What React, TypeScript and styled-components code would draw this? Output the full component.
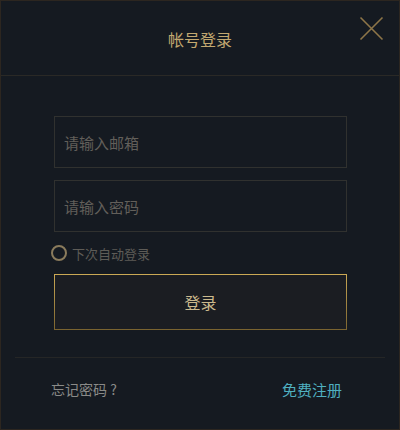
import React from "react";
import styled, { createGlobalStyle } from "styled-components";

const Global = createGlobalStyle`
  html, body { margin: 0; padding: 0; background: #151a21; }
  * { box-sizing: border-box; }
  body { font-family: "Noto Sans CJK SC", "Noto Sans", sans-serif; }
`;

const Dialog = styled.div`
  width: 400px;
  height: 430px;
  background: #151a21;
  border: 1px solid #2c2620;
  display: flex;
  flex-direction: column;
`;

const Header = styled.div`
  position: relative;
  height: 75px;
  border-bottom: 1px solid #2a2926;
  display: flex;
  align-items: center;
  justify-content: center;
  padding-top: 1px;
`;

const Title = styled.div`
  font-size: 16px;
  color: #c2a870;
  line-height: 1;
`;

const Close = styled.button`
  position: absolute;
  right: 15px;
  top: 15px;
  width: 25px;
  height: 25px;
  padding: 0;
  border: 0;
  background: none;
  cursor: pointer;
  display: block;
`;

const Body = styled.div`
  padding: 40px 53px 0 53px;
  display: flex;
  flex-direction: column;
`;

const Field = styled.input<{ $mb?: number }>`
  width: 293px;
  height: 52px;
  background: transparent;
  border: 1px solid #30312f;
  padding: 0 9px;
  font-family: inherit;
  font-size: 15px;
  color: #aaa;
  outline: none;
  margin-bottom: ${(p) => p.$mb ?? 0}px;
  &::placeholder { color: #625f5a; }
`;

const Remember = styled.label`
  display: flex;
  align-items: center;
  gap: 5px;
  margin: 12px 0 0 -3px;
  height: 18px;
  font-size: 13px;
  color: #5e5c57;
`;

const Radio = styled.span`
  width: 16px;
  height: 16px;
  border-radius: 50%;
  border: 2px solid #8a7b5c;
`;

const LoginButton = styled.button`
  margin-top: 12px;
  width: 293px;
  height: 56px;
  background: #1b1d22;
  border: 1px solid;
  border-image: linear-gradient(#cba955, #7a6330) 1;
  font-family: inherit;
  font-size: 16px;
  color: #cbb98d;
  cursor: pointer;
`;

const Divider = styled.div`
  margin: 27px 14px 0 14px;
  height: 1px;
  background: #252626;
`;

const Footer = styled.div`
  display: flex;
  justify-content: space-between;
  align-items: center;
  padding: 0 57px 4px 50px;
  height: 66px;
`;

const Link = styled.a<{ $c: string; $s: number }>`
  color: ${(p) => p.$c};
  font-size: ${(p) => p.$s}px;
  text-decoration: none;
  cursor: pointer;
`;

export default function App() {
  return (
    <>
      <Global />
      <Dialog>
        <Header>
          <Title>帐号登录</Title>
          <Close aria-label="close">
            <svg width="25" height="25" viewBox="0 0 25 25">
              <path d="M1.5 1.5 L23.5 23.5 M23.5 1.5 L1.5 23.5" stroke="#8d7548" strokeWidth="1.6" fill="none" />
            </svg>
          </Close>
        </Header>
        <Body>
          <Field placeholder="请输入邮箱" $mb={12} />
          <Field placeholder="请输入密码" type="password" />
          <Remember>
            <Radio />
            下次自动登录
          </Remember>
          <LoginButton>登录</LoginButton>
        </Body>
        <Divider />
        <Footer>
          <Link $c="#8a8a88" $s={14}>忘记密码 ?</Link>
          <Link $c="#4fb0c0" $s={15}>免费注册</Link>
        </Footer>
      </Dialog>
    </>
  );
}
